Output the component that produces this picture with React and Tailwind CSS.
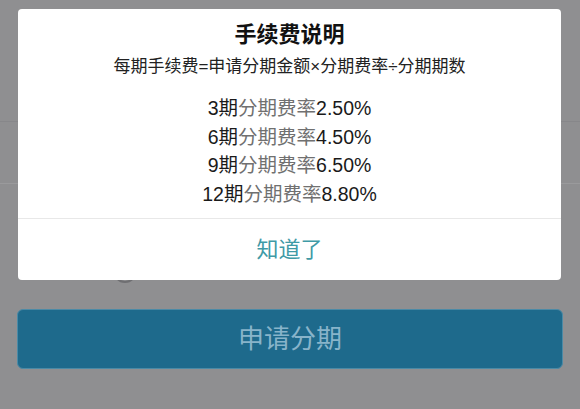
import { useState } from "react";

const FONT = {
  fontFamily: '"Liberation Sans", "Noto Sans CJK SC", sans-serif',
};

const rates = [
  { term: "3期", rate: "2.50%" },
  { term: "6期", rate: "4.50%" },
  { term: "9期", rate: "6.50%" },
  { term: "12期", rate: "8.80%" },
];

// fee explanation dialog shown over the installment form
function FeeDialog({ onClose }) {
  return (
    <div className="absolute left-[18px] top-[9px] w-[543px] bg-white rounded-[4px] flex flex-col">
      <div className="flex flex-col items-center pt-[12px] pb-[10px]">
        <h3 className="text-[22px] leading-[28px] font-bold text-[#111]">
          手续费说明
        </h3>
        <p className="mt-[6px] text-[17px] leading-[24px] text-[#222]">
          每期手续费=申请分期金额×分期费率÷分期期数
        </p>
        <div className="mt-[15px] flex flex-col items-center">
          {rates.map((r) => (
            <div
              key={r.term}
              className="text-[19.5px] leading-[28.5px] text-[#1a1a1a]"
            >
              {r.term}
              <span className="text-[#707070]">分期费率</span>
              {r.rate}
            </div>
          ))}
        </div>
      </div>
      <button
        type="button"
        onClick={onClose}
        className="h-[62px] border-t border-[#e8e8e8] text-[22px] text-[#3f9aa6]"
        style={FONT}
      >
        知道了
      </button>
    </div>
  );
}

export default function App() {
  const [open, setOpen] = useState(true);

  return (
    <div
      className="relative w-[580px] h-[409px] overflow-hidden bg-[#8f8f91]"
      style={FONT}
    >
      {/* dimmed form underneath */}
      <div className="flex flex-col">
        <div className="h-[122px] border-b border-[#87878a]" />
        <div className="h-[62px] border-b border-[#9a9a9c]" />
        <div className="h-[75px]" />
        <div className="pl-[113px]">
          <div className="w-[24px] h-[24px] rounded-full border-2 border-[#6f6f72]" />
        </div>
        <div className="px-[17px] pt-[26px]">
          <button
            type="button"
            className="w-full h-[60px] rounded-[6px] bg-[#1e6a8c] border border-[#4b8aa6] text-[26px] text-[#88b4ca]"
            style={FONT}
          >
            申请分期
          </button>
        </div>
      </div>

      {open && <FeeDialog onClose={() => setOpen(false)} />}
    </div>
  );
}
